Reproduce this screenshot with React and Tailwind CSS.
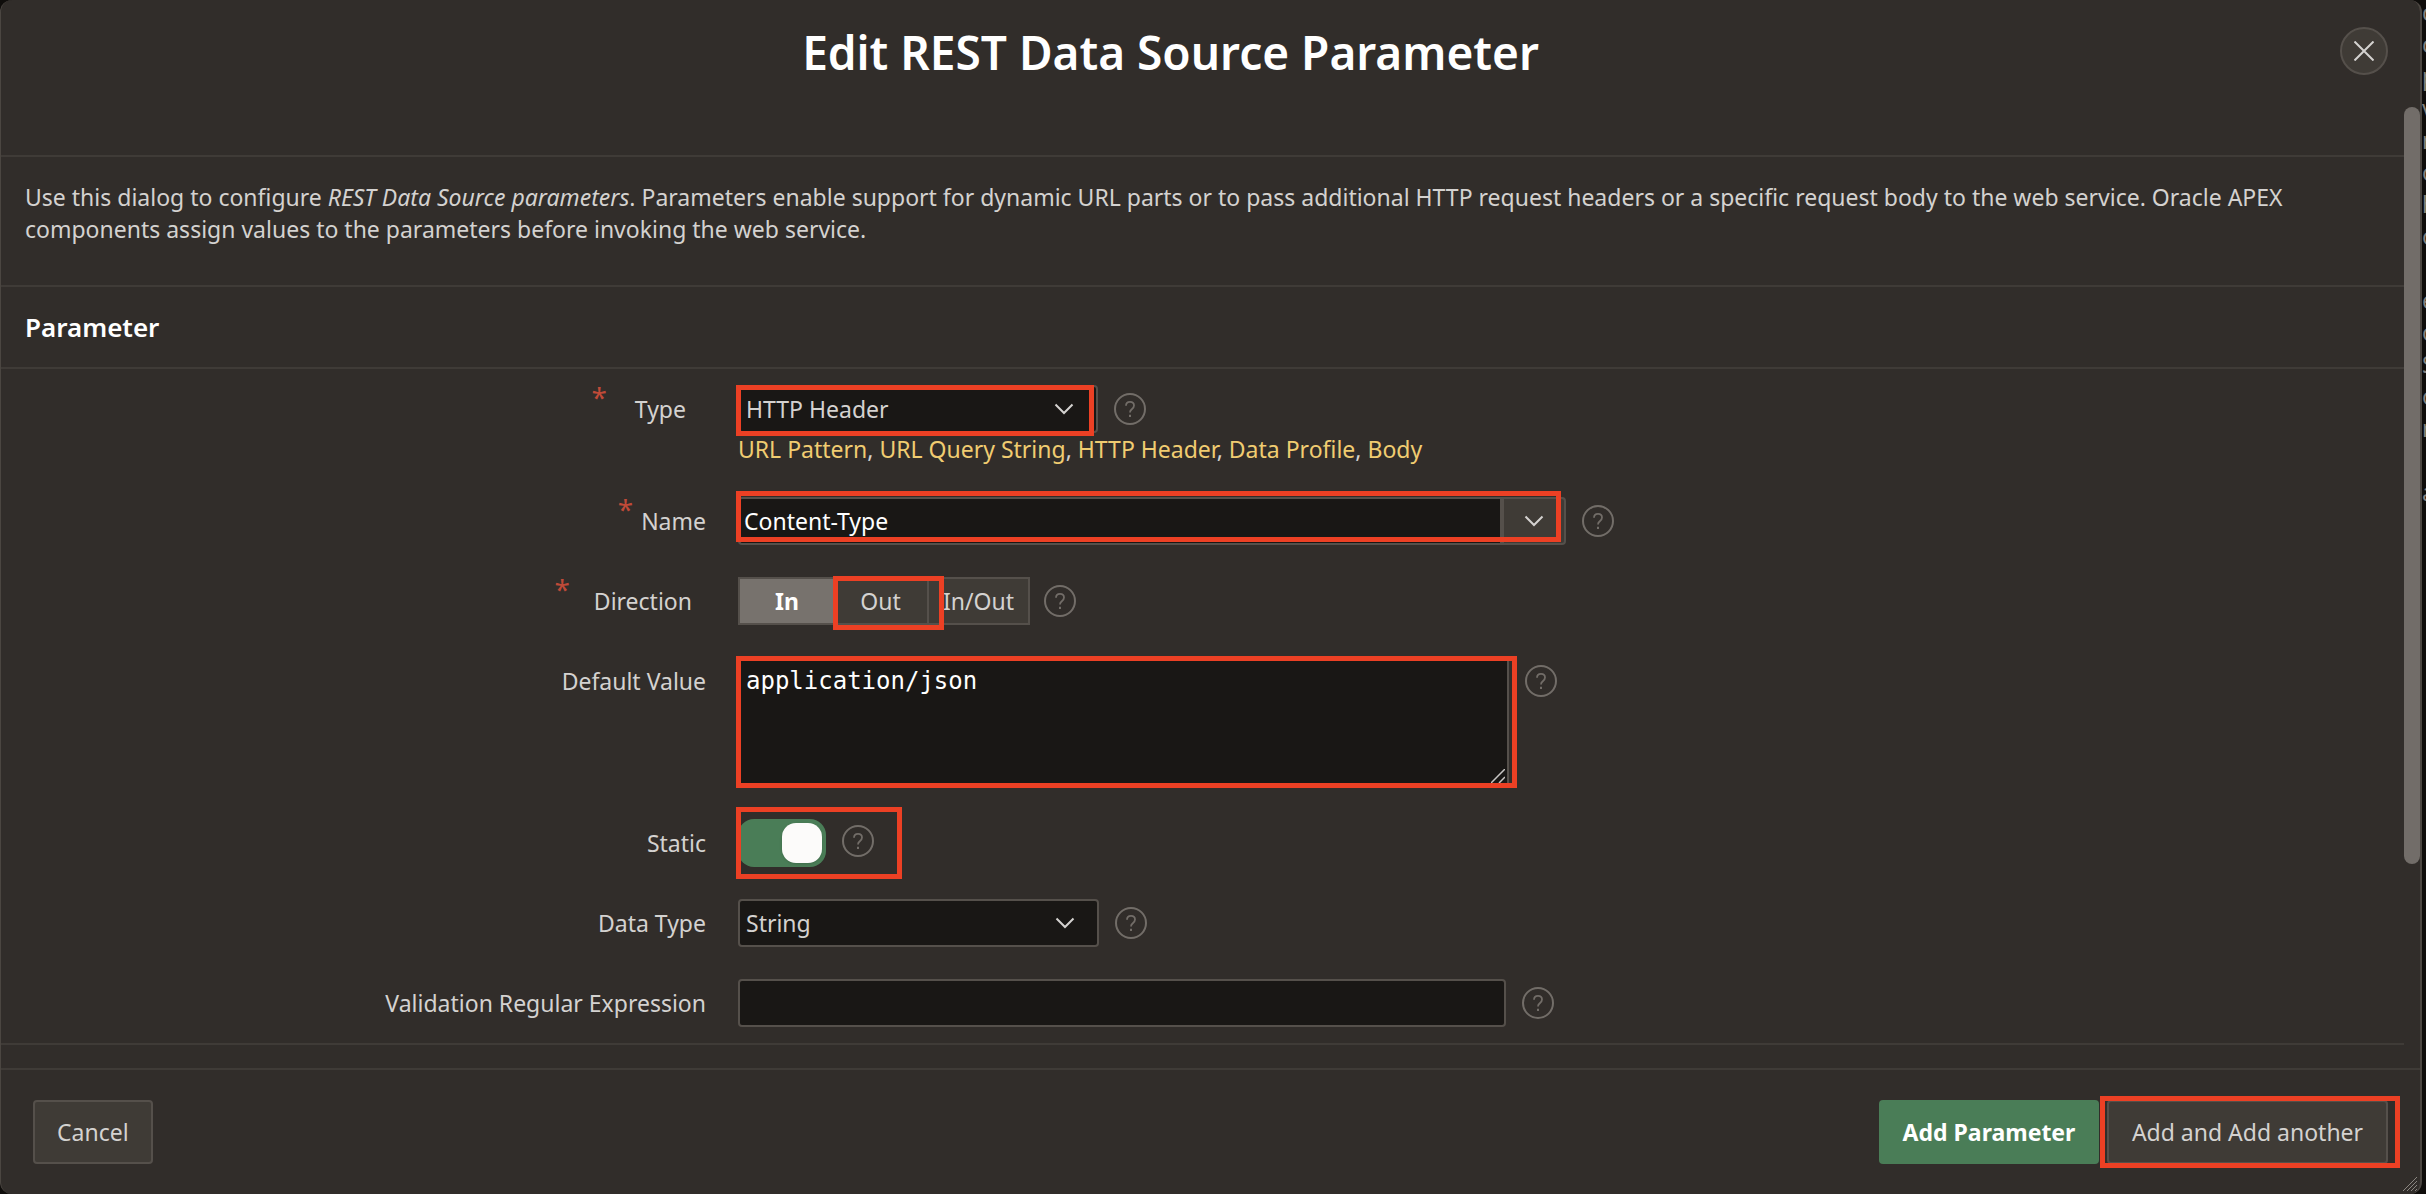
import React from "react";

const OPTIONS = ["URL Pattern", "URL Query String", "HTTP Header", "Data Profile", "Body"];
const BACKDROP = ["c", "c", "p", "v", "r", "o", "h", "o", "", "e", "o", "S", "o", "r", "", "a"];

function HelpIcon({ label, className = "mt-2" }) {
  return (
    <button type="button" aria-label={`Help: ${label}`} className={`size-8 shrink-0 text-[#726d68] ${className}`}>
      <svg viewBox="0 0 32 32" className="size-8" fill="none" stroke="currentColor" strokeWidth="2">
        <circle cx="16" cy="16" r="15" />
        <path d="M12 12.8c0-2.4 1.7-3.9 4-3.9s4 1.5 4 3.7c0 1.9-1 2.8-2.2 3.7-1.2.9-1.8 1.6-1.8 3.3" strokeWidth="1.8" />
        <path d="M16 21.8v2.2" />
      </svg>
    </button>
  );
}

function Chevron({ className = "" }) {
  return (
    <svg viewBox="0 0 20 12" className={`h-3 w-5 ${className}`} fill="none" stroke="currentColor" strokeWidth="2">
      <path d="M1.5 1.5 10 10l8.5-8.5" />
    </svg>
  );
}

/* Red frame drawn over a control that the reader should look at. */
function Highlight({ className }) {
  return <span aria-hidden="true" className={`pointer-events-none absolute z-10 border-[5px] border-[#ec4024] ${className}`} />;
}

function Row({ label, htmlFor, required, requiredClass = "", labelClass = "pr-8", children }) {
  const Tag = htmlFor ? "label" : "span";
  return (
    <div className="grid grid-cols-[minmax(0,737px)_1fr]">
      <div className={`flex h-12 items-center justify-end ${labelClass}`}>
        {required && <span className={`self-start text-[28px] leading-6 text-[#c04a38] ${requiredClass}`}>*</span>}
        <Tag htmlFor={htmlFor} id={htmlFor ? undefined : `${label}-label`}>{label}</Tag>
      </div>
      <div>{children}</div>
    </div>
  );
}

function SelectBox({ id, children }) {
  return (
    <>
      <select
        id={id}
        className="h-12 w-full appearance-none rounded-sm border-2 border-[#55504b] bg-[#191715] pr-12 pl-1.5 text-[#d4d2d0]"
      >
        {children}
      </select>
      <Chevron className="pointer-events-none absolute top-[18px] right-6" />
    </>
  );
}

export default function App() {
  return (
    <div className="flex min-h-screen overflow-hidden bg-[#0f0d0b] font-['Noto_Sans',sans-serif] text-[23px] leading-8 text-[#d4d2d0]">
      <main
        role="dialog"
        aria-labelledby="dialog-title"
        className="relative flex min-w-0 flex-1 flex-col rounded-xl border-r-2 border-l border-[#4b4641] bg-[#312d2a]"
      >
        <header className="relative flex h-[107px] justify-center pt-5 pr-20">
          <h1 id="dialog-title" className="text-[46px] leading-16 font-semibold text-white">
            Edit REST Data Source Parameter
          </h1>
          <button
            type="button"
            aria-label="Close"
            className="absolute top-[27px] right-8 flex size-12 items-center justify-center rounded-full border-2 border-[#55504b] bg-[#3f3b36]"
          >
            <svg viewBox="0 0 20 20" className="size-5" fill="none" stroke="currentColor" strokeWidth="2">
              <path d="m.5.5 19 19m0-19-19 19" />
            </svg>
          </button>
        </header>

        <div className="flex flex-1">
          <div className="min-w-0 flex-1 pt-12">
            <section className="h-[130px] border-t-2 border-[#3f3b37] pt-6 pr-8 pl-6">
              <p>
                Use this dialog to configure <em>REST Data Source parameters</em>. Parameters enable support for
                dynamic URL parts or to pass additional HTTP request headers or a specific request body to the web
                service. Oracle APEX components assign values to the parameters before invoking the web service.
              </p>
            </section>

            <section className="border-y-2 border-[#3f3b37]">
              <h2 className="border-b-2 border-[#3f3b37] px-6 py-6 text-[26px] leading-8 font-semibold text-white">
                Parameter
              </h2>

              <form className="flex flex-col gap-8 py-4">
                <Row label="Type" htmlFor="type" required requiredClass="mr-7" labelClass="pr-[52px]">
                  <div className="flex gap-4">
                    <div className="relative w-[360px]">
                      <SelectBox id="type">
                        <option>HTTP Header</option>
                      </SelectBox>
                      <Highlight className="-left-0.5 top-0 h-[51px] w-[358px]" />
                    </div>
                    <HelpIcon label="Type" />
                  </div>
                  <p className="h-8">
                    {OPTIONS.map((name, i) => (
                      <React.Fragment key={name}>
                        {i > 0 && ", "}
                        <a href="#type" className="text-[#f0cc71]">{name}</a>
                      </React.Fragment>
                    ))}
                  </p>
                </Row>

                <Row label="Name" htmlFor="name" required requiredClass="mr-2">
                  <div className="flex gap-4">
                    <div className="relative flex w-[828px]">
                      <input
                        id="name"
                        type="text"
                        defaultValue="Content-Type"
                        className="h-12 min-w-0 flex-1 rounded-l-sm border-2 border-r-0 border-[#55504b] bg-[#191715] px-1 text-white"
                      />
                      <button
                        type="button"
                        aria-label="Show names"
                        className="flex h-12 w-[66px] items-center justify-center rounded-r-sm border-2 border-l-4 border-[#55504b] bg-[#3f3b36]"
                      >
                        <Chevron />
                      </button>
                      <Highlight className="-top-1.5 -left-0.5 h-[51px] w-[825px]" />
                    </div>
                    <HelpIcon label="Name" />
                  </div>
                </Row>

                <Row label="Direction" required requiredClass="mr-6" labelClass="pr-[46px]">
                  <div className="flex gap-3.5">
                    <div role="group" aria-labelledby="Direction-label" className="relative flex h-12 border-2 border-[#55504b] bg-[#3f3b36]">
                      <button type="button" aria-pressed="true" className="w-[94px] bg-[#77726d] font-bold text-white">In</button>
                      <button type="button" aria-pressed="false" className="w-[93px]">Out</button>
                      <button type="button" aria-pressed="false" className="w-[101px] border-l-2 border-[#55504b]">In/Out</button>
                      <Highlight className="-top-[3px] left-[93px] h-[54px] w-[111px]" />
                    </div>
                    <HelpIcon label="Direction" />
                  </div>
                </Row>

                <Row label="Default Value" htmlFor="default-value">
                  <div className="flex gap-4">
                    <div className="relative w-[771px]">
                      <textarea
                        id="default-value"
                        defaultValue="application/json"
                        className="block h-[130px] w-full resize-none rounded-sm border-2 border-[#55504b] bg-[#191715] p-1.5 font-['DejaVu_Sans_Mono',monospace] text-[24px] leading-8 text-white"
                      />
                      <svg viewBox="0 0 14 14" className="pointer-events-none absolute right-1 bottom-1 size-3.5" stroke="#c8c6c4" strokeWidth="1.5">
                        <path d="M0 14 14 0M8 14l6-6" />
                      </svg>
                      <Highlight className="-top-px -left-0.5 h-[132px] w-[781px]" />
                    </div>
                    <HelpIcon label="Default Value" />
                  </div>
                </Row>

                <Row label="Static" htmlFor="static">
                  <div className="relative flex w-fit gap-4">
                    <input
                      id="static"
                      type="checkbox"
                      role="switch"
                      defaultChecked
                      className="h-12 w-[88px] appearance-none rounded-2xl bg-[#4a7d57] before:mt-1 before:ml-11 before:block before:size-10 before:rounded-[14px] before:bg-[#fcfbfa] before:shadow"
                    />
                    <HelpIcon label="Static" className="mt-1.5" />
                    <Highlight className="-top-3 -left-0.5 h-[72px] w-[166px]" />
                  </div>
                </Row>

                <Row label="Data Type" htmlFor="data-type">
                  <div className="flex gap-4">
                    <div className="relative w-[361px]">
                      <SelectBox id="data-type">
                        <option>String</option>
                      </SelectBox>
                    </div>
                    <HelpIcon label="Data Type" />
                  </div>
                </Row>

                <Row label="Validation Regular Expression" htmlFor="validation">
                  <div className="flex gap-4">
                    <input
                      id="validation"
                      type="text"
                      className="h-12 w-[768px] rounded-sm border-2 border-[#55504b] bg-[#191715] px-1 text-white"
                    />
                    <HelpIcon label="Validation Regular Expression" />
                  </div>
                </Row>
              </form>
            </section>
          </div>
          <div aria-hidden="true" className="w-4">
            <div className="h-[757px] rounded-full bg-[#726d69]" />
          </div>
        </div>

        <footer className="relative flex items-center border-t-2 border-[#3f3b37] px-8 py-[30px]">
          <button type="button" className="h-16 rounded-sm border-2 border-[#55504b] bg-[#3f3b36] px-[22px]">
            Cancel
          </button>
          <div className="ml-auto flex gap-2">
            <button type="button" className="h-16 w-[220px] rounded-sm bg-[#4a7d57] font-bold text-white">
              Add Parameter
            </button>
            <div className="relative">
              <button type="button" className="h-16 w-[281px] rounded-sm border-2 border-[#55504b] bg-[#3f3b36]">
                Add and Add another
              </button>
              <Highlight className="-top-1 -left-[7px] h-[72px] w-[300px]" />
            </div>
          </div>
          <svg viewBox="0 0 16 16" className="absolute right-0.5 bottom-0.5 size-4" stroke="#8b8681" strokeWidth="1">
            <path d="M1 15 15 1M5 15 15 5M9 15l6-6M13 15l2-2" />
          </svg>
        </footer>
      </main>

      <aside aria-hidden="true" className="w-1 shrink-0 overflow-hidden text-[#85817d]">
        {BACKDROP.map((letter, i) => (
          <p key={i} className="h-8 leading-6">{letter}</p>
        ))}
      </aside>
    </div>
  );
}
